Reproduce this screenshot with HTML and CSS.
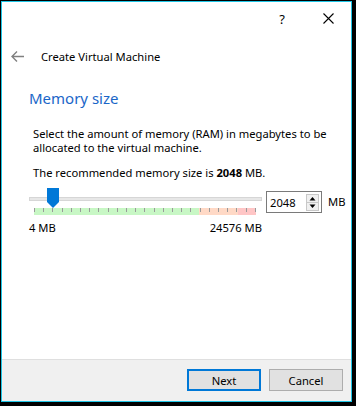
FILE: index.html
```html
<!DOCTYPE html>
<html lang="en">
<head>
  <meta charset="UTF-8" />
  <title>Create Virtual Machine</title>
  <link rel="stylesheet" href="styles.css">
</head>
<body>
  <div class="window">
    <div class="titlebar">
      <span class="tb-btn">?</span>
      <span class="tb-btn">
        <svg width="11" height="11" viewBox="0 0 11 11"><path d="M0.5 0.5 L10.5 10.5 M10.5 0.5 L0.5 10.5" stroke="#000" stroke-width="1.1" fill="none"/></svg>
      </span>
    </div>

    <div class="header">
      <svg class="back" width="13" height="11" viewBox="0 0 13 11"><path d="M6 0.5 L1 5.5 L6 10.5 M1 5.5 H13" stroke="#808080" stroke-width="1.4" fill="none"/></svg>
      <span>Create Virtual Machine</span>
    </div>

    <div class="page">
      <h2>Memory size</h2>
      <p class="desc">Select the amount of memory (RAM) in megabytes to be allocated to the virtual machine.</p>
      <p class="rec">The recommended memory size is <b>2048</b> MB.</p>

      <div class="memrow">
        <div class="slider">
          <div class="track"></div>
          <div class="thumb">
            <svg width="12" height="20" viewBox="0 0 12 20"><path d="M0 0 H12 V14 L6 20 L0 14 Z" fill="#0078d7"/></svg>
          </div>
          <div class="band"></div>
          <div class="labels">
            <span>4 MB</span>
            <span>24576 MB</span>
          </div>
        </div>
        <div class="spin">
          <span class="spin-val">2048</span>
          <span class="spin-btns">
            <svg width="13" height="17" viewBox="0 0 13 17">
              <rect x="0.5" y="0.5" width="12" height="16" fill="#f0f0f0" stroke="#c8c8c8"/>
              <line x1="1" y1="8.5" x2="12" y2="8.5" stroke="#c8c8c8"/>
              <path d="M6.5 3 L9.5 6.5 H3.5 Z" fill="#000"/>
              <path d="M6.5 14 L9.5 10.5 H3.5 Z" fill="#000"/>
            </svg>
          </span>
        </div>
        <span class="unit">MB</span>
      </div>
    </div>

    <div class="footer">
      <button class="btn default">Next</button>
      <button class="btn">Cancel</button>
    </div>
  </div>
</body>
</html>
```

FILE: styles.css
```css
body {
  margin: 0;
  background: #000;
  font-family: "Noto Sans", sans-serif;
  font-size: 11.2px;
  color: #000;
}

.window {
  box-sizing: border-box;
  margin: 1px 0 0 1px;
  width: 351px;
  height: 401px;
  border: 1px solid #1ec6e6;
  background: #fff;
  display: flex;
  flex-direction: column;
}

.titlebar {
  height: 33px;
  display: flex;
  justify-content: flex-end;
}

.tb-btn {
  width: 46px;
  display: flex;
  align-items: center;
  justify-content: center;
  font-size: 13px;
}

.header {
  display: flex;
  align-items: center;
  height: 26px;
  margin-top: 8px;
  padding-left: 9px;
}

.header .back {
  margin-right: 17px;
}

.page {
  flex: 1;
  padding: 0 0 0 27px;
}

h2 {
  margin: 19px 0 0;
  font-size: 15px;
  font-weight: normal;
  color: #1a66c8;
}

.desc {
  margin: 19px 0 0 4px;
  width: 300px;
  line-height: 14px;
}

.rec {
  margin: 11px 0 0 4px;
  line-height: 14px;
}

.memrow {
  display: flex;
  align-items: flex-start;
  margin-top: 8px;
}

.slider {
  position: relative;
  width: 233px;
  padding-top: 9px;
}

.track {
  height: 2px;
  border: 1px solid #d6d6d6;
  background: #e7e7e7;
}

.thumb {
  position: absolute;
  left: 18px;
  top: 0;
  line-height: 0;
}

.band {
  margin: 7px 0 0 5px;
  width: 222px;
  height: 7px;
  background:
    repeating-linear-gradient(to right, #9a9a9a 0 1px, transparent 1px 9.2px) top left / 100% 4px no-repeat,
    linear-gradient(to right, #c8f7c5 0 74.5%, #ffd9c6 74.5% 92%, #ffc6c6 92%);
}

.labels {
  display: flex;
  justify-content: space-between;
  margin-top: 5px;
}

.spin {
  box-sizing: border-box;
  margin: 3px 0 0 4px;
  width: 56px;
  height: 22px;
  border: 1px solid #7a7a7a;
  display: flex;
  align-items: center;
  justify-content: space-between;
  padding: 0 2px 0 3px;
}

.spin-btns {
  line-height: 0;
}

.unit {
  margin: 6px 0 0 6px;
}

.footer {
  box-sizing: border-box;
  height: 42px;
  border-top: 1px solid #dfdfdf;
  background: #f0f0f0;
  display: flex;
  justify-content: flex-end;
  align-items: flex-start;
  gap: 8px;
  padding: 9px 8px 0 0;
}

.btn {
  box-sizing: border-box;
  width: 74px;
  height: 22px;
  border: 1px solid #adadad;
  background: #e1e1e1;
  font-family: inherit;
  font-size: 11.2px;
  padding: 0;
}

.btn.default {
  border: 2px solid #0078d7;
}
```
